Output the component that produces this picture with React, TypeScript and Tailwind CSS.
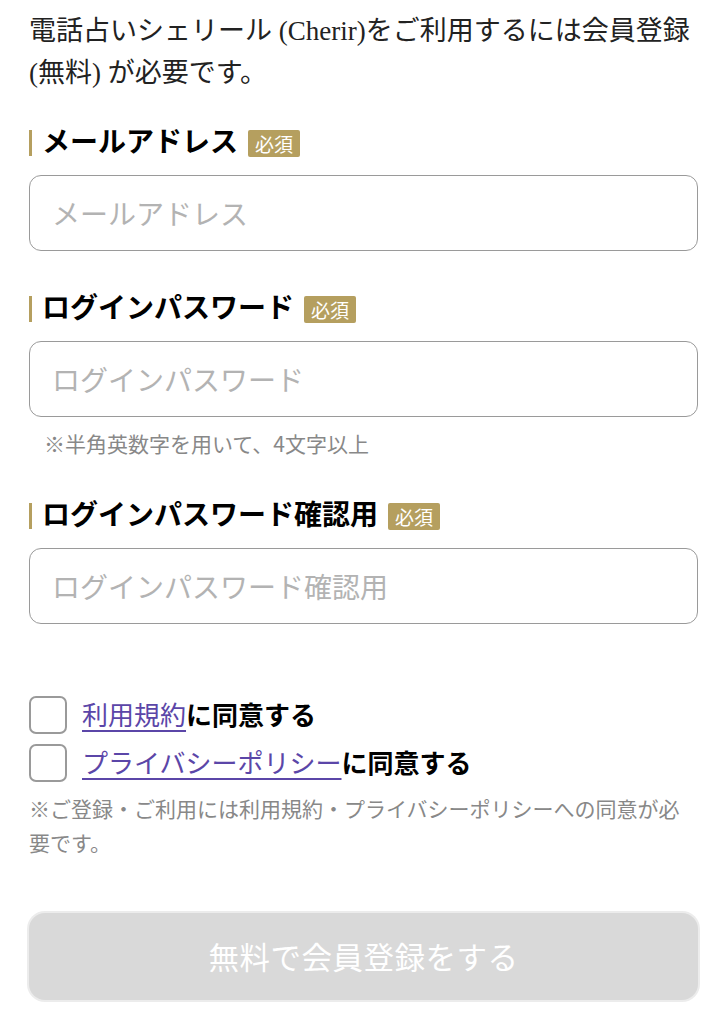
import React from 'react';

const serif = 'font-["Liberation_Serif","Noto_Sans_CJK_JP",serif]';
const sans = 'font-["Noto_Sans_CJK_JP","Noto_Sans",sans-serif]';

interface FieldProps {
  label: string;
  type?: string;
  hint?: string;
}

const FieldLabel: React.FC<{ label: string }> = ({ label }) => (
  <div className="flex items-center h-[34px]">
    <span className="w-[3px] h-[26px] bg-[#b59f5f] mr-[10px]" />
    <span className={`${serif} text-[28px] font-bold text-black leading-[34px]`}>{label}</span>
    <span
      className={`${sans} ml-[10px] w-[52px] h-[27px] flex items-center justify-center rounded-[2px] bg-[#b59f5f] text-white text-[19px] leading-none`}
    >
      必須
    </span>
  </div>
);

const Field: React.FC<FieldProps> = ({ label, type = 'text', hint }) => (
  <div>
    <FieldLabel label={label} />
    <input
      type={type}
      placeholder={label}
      className={`${sans} mt-[15px] block w-full h-[76px] px-[22px] border border-[#9a9a9a] rounded-[12px] text-[28px] text-black placeholder:text-[#b3b3b3] outline-none`}
    />
    {hint && (
      <p className={`${sans} mt-[11px] pl-[15px] text-[21px] leading-[30px] text-[#888]`}>{hint}</p>
    )}
  </div>
);

const Agree: React.FC<{ link: string }> = ({ link }) => (
  <label className="flex items-center gap-[15px] h-[38px]">
    <input type="checkbox" className="peer sr-only" />
    <span className="w-[38px] h-[38px] shrink-0 border-[2px] border-[#9a9a9a] rounded-[7px] bg-white" />
    <span className={`${serif} text-[26px] font-bold leading-[38px] pt-[3px] text-black`}>
      <a href="#" className="text-[#5b46a8] underline underline-offset-[5px] decoration-[2px] font-normal">
        {link}
      </a>
      に同意する
    </span>
  </label>
);

export default function App() {
  return (
    <div className="w-[727px] min-h-[1024px] bg-white px-[29px] pt-[10px]">
      <p className={`${serif} text-[27px] leading-[42px] text-[#222]`}>
        電話占いシェリール (Cherir)をご利用するには会員登録 (無料) が必要です。
      </p>

      <div className="mt-[32px] flex flex-col gap-[41px]">
        <Field label="メールアドレス" type="email" />
        <Field label="ログインパスワード" type="password" hint="※半角英数字を用いて、4文字以上" />
        <Field label="ログインパスワード確認用" type="password" />
      </div>

      <div className="mt-[72px] flex flex-col gap-[10px]">
        <Agree link="利用規約" />
        <Agree link="プライバシーポリシー" />
      </div>

      <p className={`${sans} mt-[9px] text-[21px] leading-[34px] text-[#888]`}>
        ※ご登録・ご利用には利用規約・プライバシーポリシーへの同意が必要です。
      </p>

      <button
        type="button"
        disabled
        className={`${sans} mt-[54px] w-full h-[87px] rounded-[16px] bg-[#d9d9d9] text-white text-[30.5px] tracking-[0.5px] shadow-[0_0_0_2px_#ececec]`}
      >
        無料で会員登録をする
      </button>
    </div>
  );
}
